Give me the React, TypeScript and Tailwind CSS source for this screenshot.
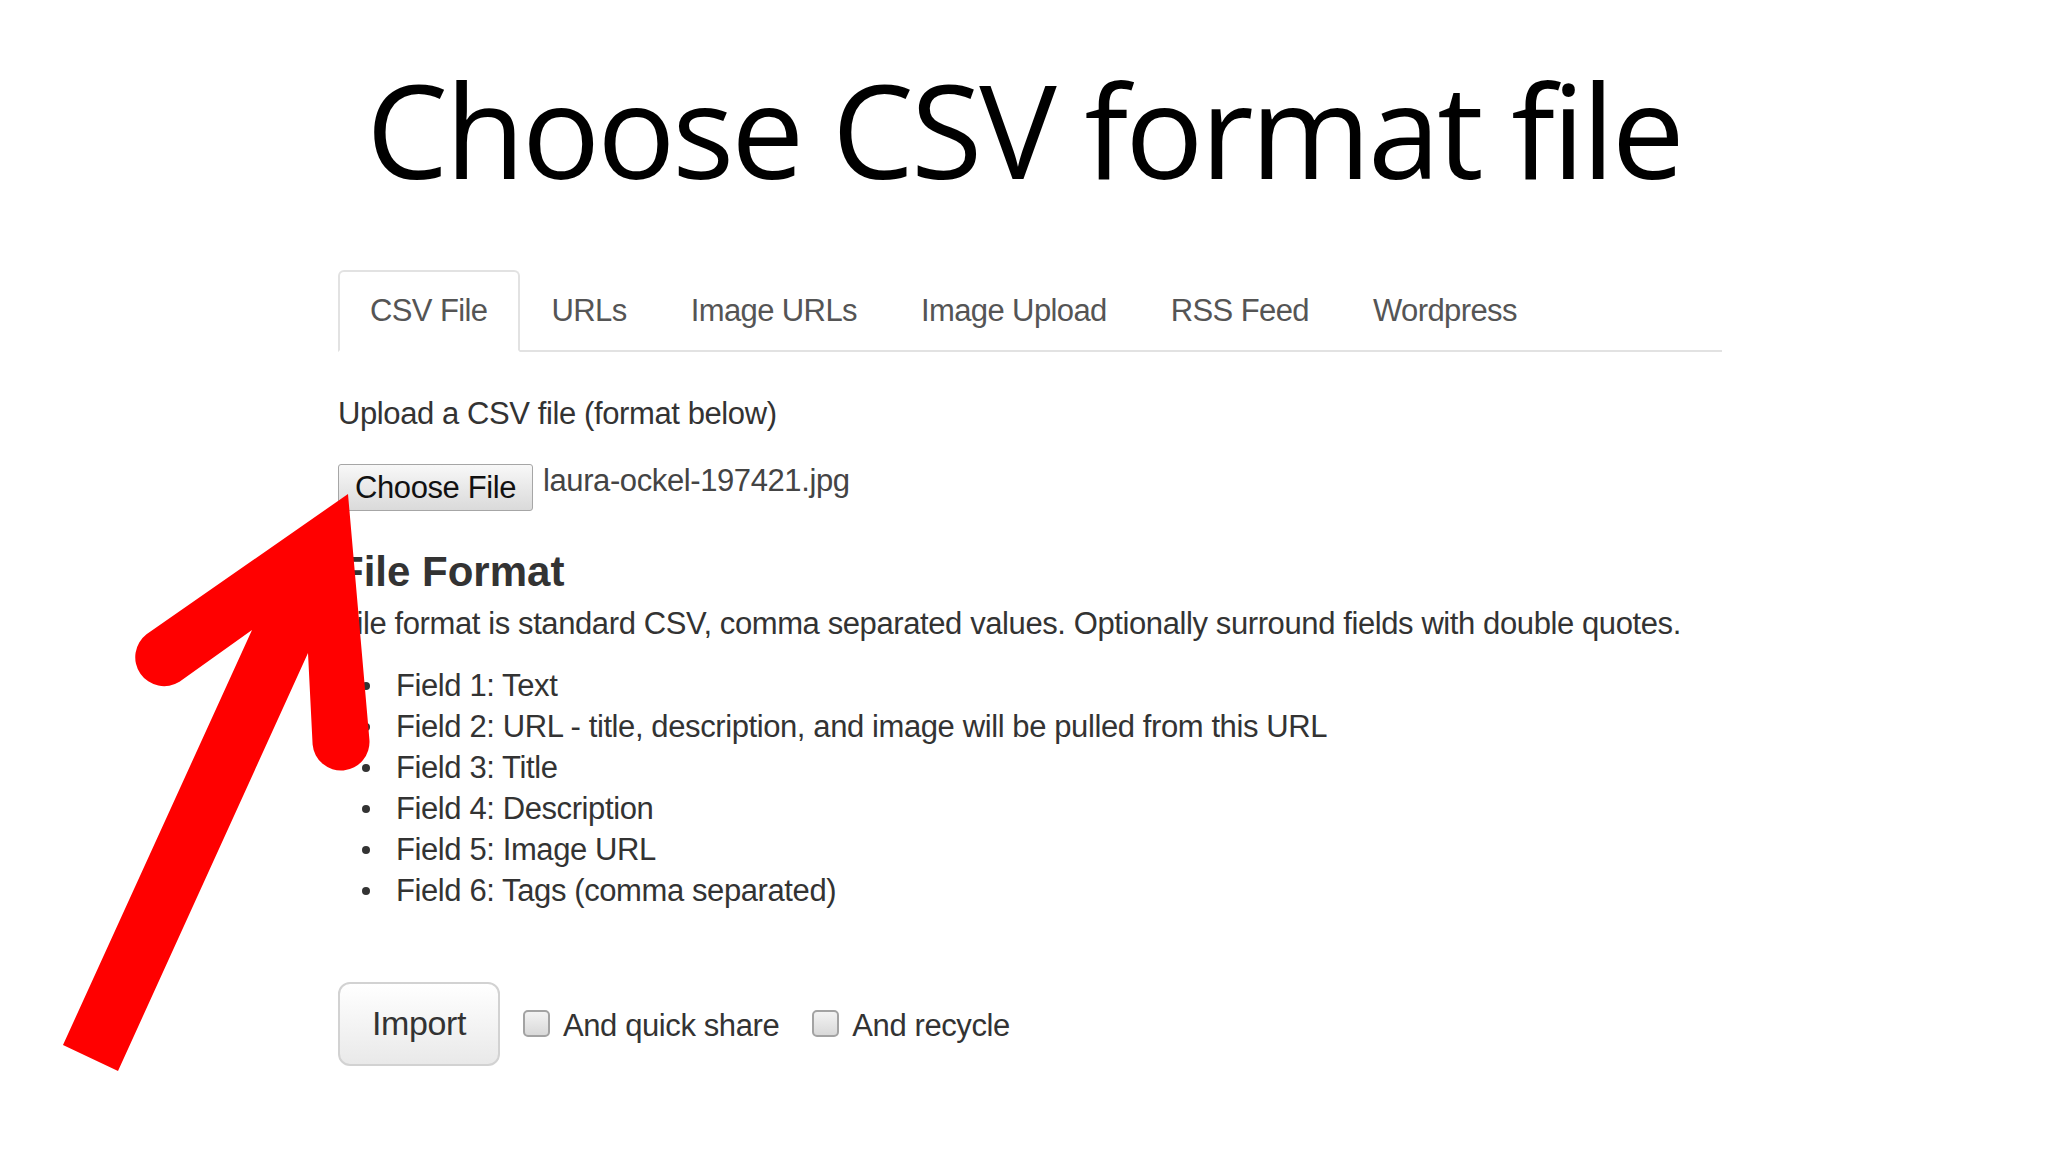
import React from 'react';

const tabs = ['CSV File', 'URLs', 'Image URLs', 'Image Upload', 'RSS Feed', 'Wordpress'];

const fields = [
    'Field 1: Text',
    'Field 2: URL - title, description, and image will be pulled from this URL',
    'Field 3: Title',
    'Field 4: Description',
    'Field 5: Image URL',
    'Field 6: Tags (comma separated)',
];

const Checkbox = ({ label, className }: { label: string; className?: string }) => (
    <label className={`flex items-center ${className ?? ''}`}>
        <span className="h-[27px] w-[27px] rounded-[5px] border-2 border-[#a3a3a3] bg-linear-to-b from-[#f3f3f3] to-[#d9d9d9]" />
        <span className="ml-[13px] mt-[4px] text-[31px] leading-[41px] tracking-[-0.4px] text-[#333]">{label}</span>
    </label>
);

// big red marker arrow pointing at the file button
const Arrow = () => (
    <svg className="pointer-events-none absolute left-0 top-0" width="2048" height="1152" viewBox="0 0 2048 1152">
        <path
            fill="#ff0000"
            d="M 348 494 L 369.4 739.5 A 28.5 28.5 0 0 1 312.6 744.5 L 308 653 L 118 1071 L 63 1045 L 252 630 L 179.5 681.8 A 29 29 0 0 1 146.5 634.2 Z"
        />
    </svg>
);

export default function App() {
    return (
        <div className="relative h-[1152px] w-full overflow-hidden bg-white font-['Liberation_Sans',Arial,sans-serif]">
            <h1 className="mt-[64px] text-center font-['Open_Sans',sans-serif] text-[130px] leading-none tracking-[-3px] text-black">
                Choose CSV format file
            </h1>

            <div className="ml-[338px] mt-[76px] w-[1384px]">
                <div className="flex border-b-2 border-[#e2e2e2]">
                    {tabs.map((t, i) => (
                        <div
                            key={t}
                            className={
                                i === 0
                                    ? '-mb-[2px] flex h-[82px] items-center rounded-t-[6px] border-2 border-[#e2e2e2] border-b-white bg-white px-[30px] text-[31px] tracking-[-0.6px] text-[#555]'
                                    : '-mb-[2px] flex h-[82px] items-center border-2 border-transparent px-[30px] text-[31px] tracking-[-0.6px] text-[#555]'
                            }
                        >
                            {t}
                        </div>
                    ))}
                </div>

                <p className="mt-[40px] text-[31px] leading-[44px] tracking-[-0.4px] text-[#333]">Upload a CSV file (format below)</p>

                <div className="mt-[22px] flex items-center">
                    <button className="h-[47px] w-[195px] rounded-[3px] border border-[#a6a6a6] bg-linear-to-b from-[#f8f8f8] to-[#dadada] text-[31px] tracking-[-0.4px] text-[#111]">
                        Choose File
                    </button>
                    <span className="mb-[12px] ml-[10px] text-[31px] tracking-[-0.4px] text-[#444]">laura-ockel-197421.jpg</span>
                </div>

                <h2 className="mt-[32px] text-[42px] font-bold leading-[46px] text-[#333]">File Format</h2>
                <p className="mt-[8px] text-[31px] leading-[41px] tracking-[-0.4px] text-[#333]">
                    File format is standard CSV, comma separated values. Optionally surround fields with double quotes.
                </p>

                <ul className="mt-[22px]">
                    {fields.map(f => (
                        <li key={f} className="flex h-[41px] items-center text-[31px] tracking-[-0.4px] text-[#333]">
                            <span className="ml-[24px] mr-[26px] h-[8px] w-[8px] rounded-full bg-[#333]" />
                            {f}
                        </li>
                    ))}
                </ul>

                <div className="mt-[70px] flex items-center">
                    <button className="h-[84px] w-[162px] rounded-[12px] border-2 border-[#d2d2d2] bg-linear-to-b from-white to-[#e9e9e9] text-[34px] tracking-[-0.4px] text-[#333]">
                        Import
                    </button>
                    <Checkbox label="And quick share" className="ml-[23px]" />
                    <Checkbox label="And recycle" className="ml-[33px]" />
                </div>
            </div>

            <Arrow />
        </div>
    );
}
